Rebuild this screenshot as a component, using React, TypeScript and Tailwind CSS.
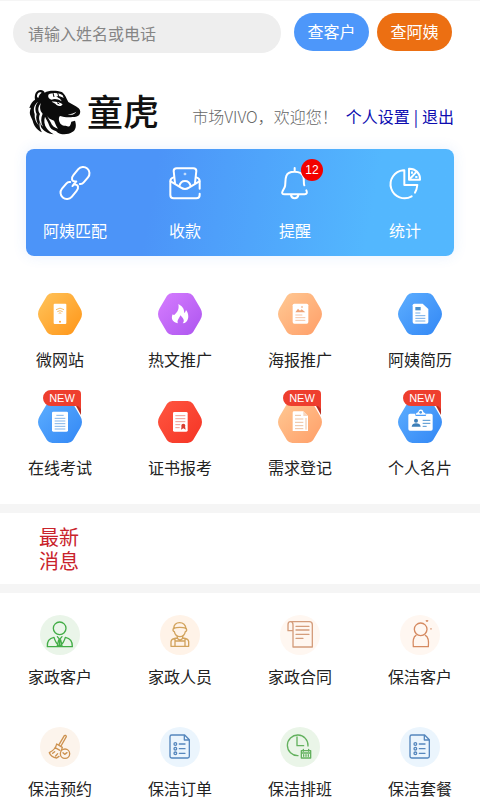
import type { ReactNode } from "react";

type Tile = { label: string; icon: ReactNode; from?: string; to?: string; isNew?: boolean };

const HEX_PATH =
  "M43 0H89Q99 0 105 8L127 46Q137 63 127 80L105 118Q99 126 89 126H43Q33 126 27 118L5 80Q-5 63 5 46L27 8Q33 0 43 0Z";

function TigerLogo() {
  return (
    <svg viewBox="26 24 156 138" className="h-[46px] w-[52px] shrink-0" aria-hidden="true">
      <path
        fill="#0b0b0b"
        d="M44 56C41 40 48 27 61 27C67 27 71 30 73 35C84 28 108 28 124 33C134 39 138 52 144 63C154 70 166 74 175 82C181 88 181 96 177 101C174 106 166 108 157 108C143 110 130 108 119 105C113 111 116 123 122 130C127 136 134 133 141 136C149 139 151 130 153 122L164 119C169 133 167 147 156 153C146 160 130 161 119 158C111 155 110 151 104 149C97 148 89 142 86 132C84 123 78 116 74 107C70 118 72 132 79 142C84 149 91 155 100 160C82 158 68 149 62 138L59 122C55 134 60 145 65 154C50 147 40 134 37 119L31 106C27 98 28 89 32 80L27 81C31 67 37 61 44 56Z"
      />
      <g fill="#fff">
        <path d="M50 48C49 37 57 31 64 35C59 38 56 43 54 51Z" />
        <path d="M84 41C96 34 115 35 127 43L130 51C122 46 114 45 108 47C117 50 122 55 124 61C113 54 103 52 94 56C86 54 82 48 84 41Z" />
        <path d="M94 62C105 61 118 64 127 70L122 75C114 75 108 72 105 68Z" />
        <path d="M53 62C43 75 44 89 49 99C45 112 49 123 56 134C46 124 42 112 43 99C38 84 41 72 53 62Z" />
        <path d="M62 66C57 78 59 90 67 98C61 111 61 124 68 137C57 125 53 111 59 99C51 88 53 76 62 66Z" />
        <path d="M78 101C83 111 92 116 101 119C105 127 107 135 113 143C103 141 94 134 91 124Z" />
        <path d="M142 99C151 100 160 97 168 92C163 101 151 104 142 99Z" />
      </g>
      <g fill="none" stroke="#0b0b0b" strokeWidth="3">
        <path d="M98 36L101 48M112 35L116 51M110 65L117 69" />
      </g>
    </svg>
  );
}

const lineProps = {
  fill: "none",
  stroke: "currentColor",
  strokeLinecap: "round" as const,
  strokeLinejoin: "round" as const,
};

const quickActions = [
  {
    label: "阿姨匹配",
    icon: (
      <g transform="rotate(-50 48 48)">
        <path d="M36 48H54M54 48C43 37 52 29 64 29H86A19 19 0 0 1 86 67H66Q58 67 55 61" />
        <path d="M42 48C53 59 44 67 32 67H10A19 19 0 0 1 10 29H30Q38 29 41 35" />
      </g>
    ),
  },
  {
    label: "收款",
    icon: (
      <>
        <path d="M92 65V42Q92 34 82 31M92 80V84Q92 94 82 94H14Q4 94 4 84V42Q4 34 14 31" />
        <path d="M18 48L14 12Q14 4 23 4H73Q82 4 82 12L78 48" />
        <path d="M5 43L36 62Q48 70 60 62L91 43" />
        <path d="M31 57C36 37 60 37 65 57" />
        <circle cx="48" cy="21" r="1" />
      </>
    ),
  },
  {
    label: "提醒",
    badge: "12",
    icon: (
      <>
        <path d="M47 3V11M82 70Q87 81 77 82H17Q6 82 11 72L17 61C21 52 17 39 22 27C27 10 67 9 73 29C76 39 73 48 76 55" />
        <path d="M36 84C38 97 56 97 58 84" />
      </>
    ),
  },
  {
    label: "统计",
    icon: (
      <>
        <path d="M43 10A42 42 0 1 0 68 88M78 77Q83 70 85 54H46V10" />
        <path d="M60 5V38H93C94 20 80 4 60 5Z" />
        <path d="M65 33L83 14M69 16V18M81 30H83" />
      </>
    ),
  },
];

const tools: Tile[] = [
  {
    label: "微网站",
    from: "#ffc45c",
    to: "#ff9517",
    icon: (
      <>
        <rect x="47" y="32" width="38" height="61" rx="3" fill="#fff" />
        <g fill="none" stroke="#f5bd6b" strokeWidth="3">
          <path d="M54 50Q66 41 78 50M58 56Q66 50 74 56M62 61Q66 58 70 61" />
        </g>
        <circle cx="66" cy="86" r="3" fill="#ffa63a" />
      </>
    ),
  },
  {
    label: "热文推广",
    from: "#d67dff",
    to: "#ad55ef",
    icon: (
      <path
        fill="#fff"
        fillRule="evenodd"
        d="M61 33C78 42 78 52 79 60C82 58 83 54 84 51C92 61 94 77 85 86Q81 91 74 91C82 82 75 76 67 67C65 76 55 82 60 91C43 88 38 76 44 64C47 67 49 67 51 64C59 56 64 48 61 33Z"
      />
    ),
  },
  {
    label: "海报推广",
    from: "#ffc994",
    to: "#ff9e68",
    icon: (
      <>
        <rect x="44" y="32" width="47" height="60" rx="5" fill="#fff" />
        <path d="M52 58L60 47L66 53L71 49L82 58ZM70 40H74V44H70Z" fill="#efa276" />
        <path d="M52 66H73M52 74H82M52 82H82" stroke="#f7c4a5" strokeWidth="3" />
      </>
    ),
  },
  {
    label: "阿姨简历",
    from: "#5daeff",
    to: "#3287f5",
    icon: (
      <>
        <path d="M49 32H74L91 48V87Q91 92 86 92H49Q44 92 44 87V37Q44 32 49 32Z" fill="#fff" />
        <path d="M52 42H68V52H52Z" fill="#4b91cd" />
        <path d="M52 60H67M52 68H82M52 76H82M52 84H82" stroke="#75aee8" strokeWidth="3" />
      </>
    ),
  },
  {
    label: "在线考试",
    from: "#5daeff",
    to: "#3287f5",
    isNew: true,
    icon: (
      <>
        <rect x="42" y="32" width="48" height="60" rx="4" fill="#fff" />
        <path d="M55 43H77M50 52H82M50 60H82M50 68H82M50 76H82M50 84H82" stroke="#82b5ea" strokeWidth="3" />
      </>
    ),
  },
  {
    label: "证书报考",
    from: "#ff5640",
    to: "#f53425",
    icon: (
      <>
        <rect x="45" y="33" width="44" height="59" rx="4" fill="#fff" />
        <path d="M52 44H82M52 53H82M52 62H82M52 71H67M52 80H65" stroke="#f19b91" strokeWidth="3" />
        <circle cx="76" cy="74" r="6" fill="#d93c30" />
        <path d="M71 76L69 86L76 82L83 86L81 76Z" fill="#d93c30" />
      </>
    ),
  },
  {
    label: "需求登记",
    from: "#ffc994",
    to: "#ff9e68",
    isNew: true,
    icon: (
      <>
        <path d="M48 31H76L90 45V90H44V35Q44 31 48 31Z" fill="#fff" />
        <path d="M76 31V45H90" fill="#f7d5bd" />
        <path d="M51 43H69M51 54H76M51 64H76M51 74H76M51 83H76M84 51V86" stroke="#eec19f" strokeWidth="3" />
      </>
    ),
  },
  {
    label: "个人名片",
    from: "#5daeff",
    to: "#3287f5",
    isNew: true,
    icon: (
      <>
        <path d="M36 38H52Q50 45 57 45H80Q86 45 84 38H99Q104 38 104 43V84Q104 89 99 89H36Q31 89 31 84V43Q31 38 36 38Z" fill="#fff" />
        <path d="M53 41C54 35 59 35 61 33C62 23 75 23 76 33C78 36 83 35 84 41Z" fill="#fff" />
        <circle cx="68" cy="34" r="4" fill="#4c95e0" />
        <circle cx="54" cy="59" r="6" fill="#3d7fb8" />
        <path d="M41 77Q43 67 54 67Q66 67 68 77Z" fill="#3d7fb8" />
        <path d="M74 58H97M74 67H97M74 76H86" stroke="#4d93cf" strokeWidth="3" />
      </>
    ),
  },
];

const checklistIcon = (
  <>
    <path d="M35 24H74L88 38V88Q88 93 83 93H35Q30 93 30 88V29Q30 24 35 24ZM73 25V39H87" />
    <path d="M58 51H75M58 65H75M58 79H75" />
    <circle cx="46" cy="51" r="4" />
    <circle cx="46" cy="65" r="4" />
    <circle cx="46" cy="79" r="4" />
  </>
);

const services = [
  {
    label: "家政客户",
    color: "bg-[#eaf5e9] text-[#43ad47]",
    icon: (
      <>
        <circle cx="59" cy="40" r="19" />
        <path d="M22 95Q20 71 42 67Q47 85 59 94Q71 85 76 67Q98 71 97 95ZM52 65L59 73L66 65M56 75L52 93M62 75L66 93M59 75V94" />
      </>
    ),
  },
  {
    label: "家政人员",
    color: "bg-[#fff3e8] text-[#d2a35d]",
    icon: (
      <>
        <path d="M42 41C37 17 80 17 77 41M40 40Q60 34 79 40M40 41Q37 48 43 50Q46 65 60 65Q73 65 76 50Q82 48 79 41" />
        <path d="M52 64V69Q34 70 33 80V94H86V80Q85 70 68 69V64M45 71V94M75 71V94M45 78H75M51 69Q60 80 69 69" />
      </>
    ),
  },
  {
    label: "家政合同",
    color: "bg-[#fff7f1] text-[#d49d7c]",
    icon: (
      <>
        <path d="M38 47H24V29Q24 20 31 20H88Q97 20 97 29V96H39V29Q39 20 31 20" />
        <path d="M48 34H87M48 45H87M48 58H87M48 70H69" />
      </>
    ),
  },
  {
    label: "保洁客户",
    color: "bg-[#fff7f1] text-[#d58a61]",
    icon: (
      <>
        <circle cx="62" cy="43" r="19" />
        <path d="M48 61Q37 67 40 95H85Q88 67 76 61" />
        <path d="M79 17L81 19L83 17M93 41V42" />
      </>
    ),
  },
  {
    label: "保洁预约",
    color: "bg-[#fcf4ec] text-[#cd9250]",
    icon: (
      <>
        <path d="M73 26L57 53M79 29L63 57M73 26Q78 23 79 29M50 51L67 61L65 68M50 51Q47 67 28 77Q33 90 50 93L57 88M45 62L60 70M38 79L44 74M47 87L53 80" />
        <circle cx="75" cy="80" r="14" />
        <path d="M69 77L74 82L81 77" />
      </>
    ),
  },
  { label: "保洁订单", color: "bg-[#ebf5fd] text-[#5687bd]", icon: checklistIcon },
  {
    label: "保洁排班",
    color: "bg-[#eaf5e8] text-[#63b15e]",
    icon: (
      <>
        <path d="M54 86A31 31 0 1 1 84 57M51 30V56H71" />
        <path d="M64 71H92V93H64ZM64 78H92M70 67V73M86 67V73M71 83V88M78 83V88M85 83V88" />
      </>
    ),
  },
  { label: "保洁套餐", color: "bg-[#ebf5fd] text-[#5687bd]", icon: checklistIcon },
];

function NewBadge() {
  return (
    <span className="absolute -top-[11px] left-[5px] h-[26px] w-[38px]">
      <svg viewBox="0 0 38 26" className="absolute inset-0 size-full" aria-hidden="true">
        <path d="M32 12H38V25L33 16Z" fill="#b92c20" />
        <path d="M8 0H34Q38 0 38 4V19L35 16H8A8 8 0 0 1 8 0Z" fill="#ee3e2e" />
      </svg>
      <span className="relative block text-center font-['Liberation_Sans',sans-serif] text-[11px] leading-4 text-white">
        NEW
      </span>
    </span>
  );
}

function HexIcon({ tile, id }: { tile: Tile; id: string }) {
  return (
    <span className="relative block h-[42px] w-11">
      <svg viewBox="0 0 132 126" className="block size-full" aria-hidden="true">
        <defs>
          <linearGradient id={id} x1="0" y1="0" x2="1" y2="1">
            <stop offset="0" stopColor={tile.from} />
            <stop offset="1" stopColor={tile.to} />
          </linearGradient>
        </defs>
        <path d={HEX_PATH} fill={`url(#${id})`} />
        {tile.icon}
      </svg>
      {tile.isNew && <NewBadge />}
    </span>
  );
}

export default function App() {
  return (
    <main className="border-t border-[#f5f5f5] bg-white font-['Noto_Sans_CJK_SC',sans-serif] text-base leading-5 text-[#222]">
      <form className="flex items-start pt-3 pr-7 pl-[13px]" onSubmit={(e) => e.preventDefault()}>
        <input
          type="text"
          aria-label="请输入姓名或电话"
          placeholder="请输入姓名或电话"
          className="h-10 min-w-0 flex-1 rounded-full bg-[#eee] px-[15px] text-base outline-none placeholder:text-[#858585]"
        />
        <button type="submit" className="ml-[13px] h-[38px] w-[75px] rounded-full bg-[#4d97fa] pb-0.5 text-white">
          查客户
        </button>
        <button type="submit" className="ml-2 h-[38px] w-[75px] rounded-full bg-[#ec6f12] pb-0.5 text-white">
          查阿姨
        </button>
      </form>

      <header className="mt-9 flex h-[46px] items-center pr-[26px] pl-[29px]">
        <TigerLogo />
        <h1 className="mb-1 ml-1.5 text-4xl font-medium whitespace-nowrap text-[#111]">童虎</h1>
        <div className="mt-2 ml-auto flex whitespace-nowrap">
          <span className="mr-2 font-light text-[#666]">市场VIVO，欢迎您！</span>
          <nav className="flex text-[#0c0cb0]">
            <a href="#settings">个人设置</a>
            <span className="px-1">|</span>
            <a href="#logout">退出</a>
          </nav>
        </div>
      </header>

      <section className="mx-[26px] mt-[14px] rounded-lg bg-linear-100 from-[#4c94f8] from-30% to-[#53b7fe] to-80% shadow-[0_0_14px_#3b82f61f]">
        <div className="-mx-1.5 grid grid-cols-4 pt-[18px] pb-4">
          {quickActions.map((action) => (
            <button key={action.label} className="flex flex-col items-center gap-[21px] text-white">
              <span className="relative block size-8">
                <svg viewBox="0 0 96 96" className="block size-full overflow-visible" strokeWidth="6" {...lineProps}>
                  {action.icon}
                </svg>
                {action.badge && (
                  <span className="absolute -top-2 left-[22px] flex size-[22px] items-center justify-center rounded-full bg-[#f20000] font-['Liberation_Sans',sans-serif] text-xs">
                    {action.badge}
                  </span>
                )}
              </span>
              <span>{action.label}</span>
            </button>
          ))}
        </div>
      </section>

      <section className="mt-[37px] grid grid-cols-4 gap-y-8 pb-[27px]">
        {tools.map((tile, i) => (
          <button key={tile.label} className="flex flex-col items-center gap-[14px]">
            <HexIcon tile={tile} id={`hex-${i}`} />
            <span>{tile.label}</span>
          </button>
        ))}
      </section>

      <section className="border-y-[9px] border-[#f5f5f5] pt-3 pb-[11px] pl-[39px]">
        <h2 className="w-10 text-xl leading-6 text-[#c9232b]">最新消息</h2>
      </section>

      <section className="grid grid-cols-4 gap-y-[42px] pt-[22px]">
        {services.map((item) => (
          <button key={item.label} className="flex flex-col items-center gap-3 leading-[18px]">
            <span className={`block size-10 rounded-full ${item.color}`}>
              <svg viewBox="0 0 120 120" className="block size-full" strokeWidth="4" {...lineProps}>
                {item.icon}
              </svg>
            </span>
            <span>{item.label}</span>
          </button>
        ))}
      </section>
    </main>
  );
}
